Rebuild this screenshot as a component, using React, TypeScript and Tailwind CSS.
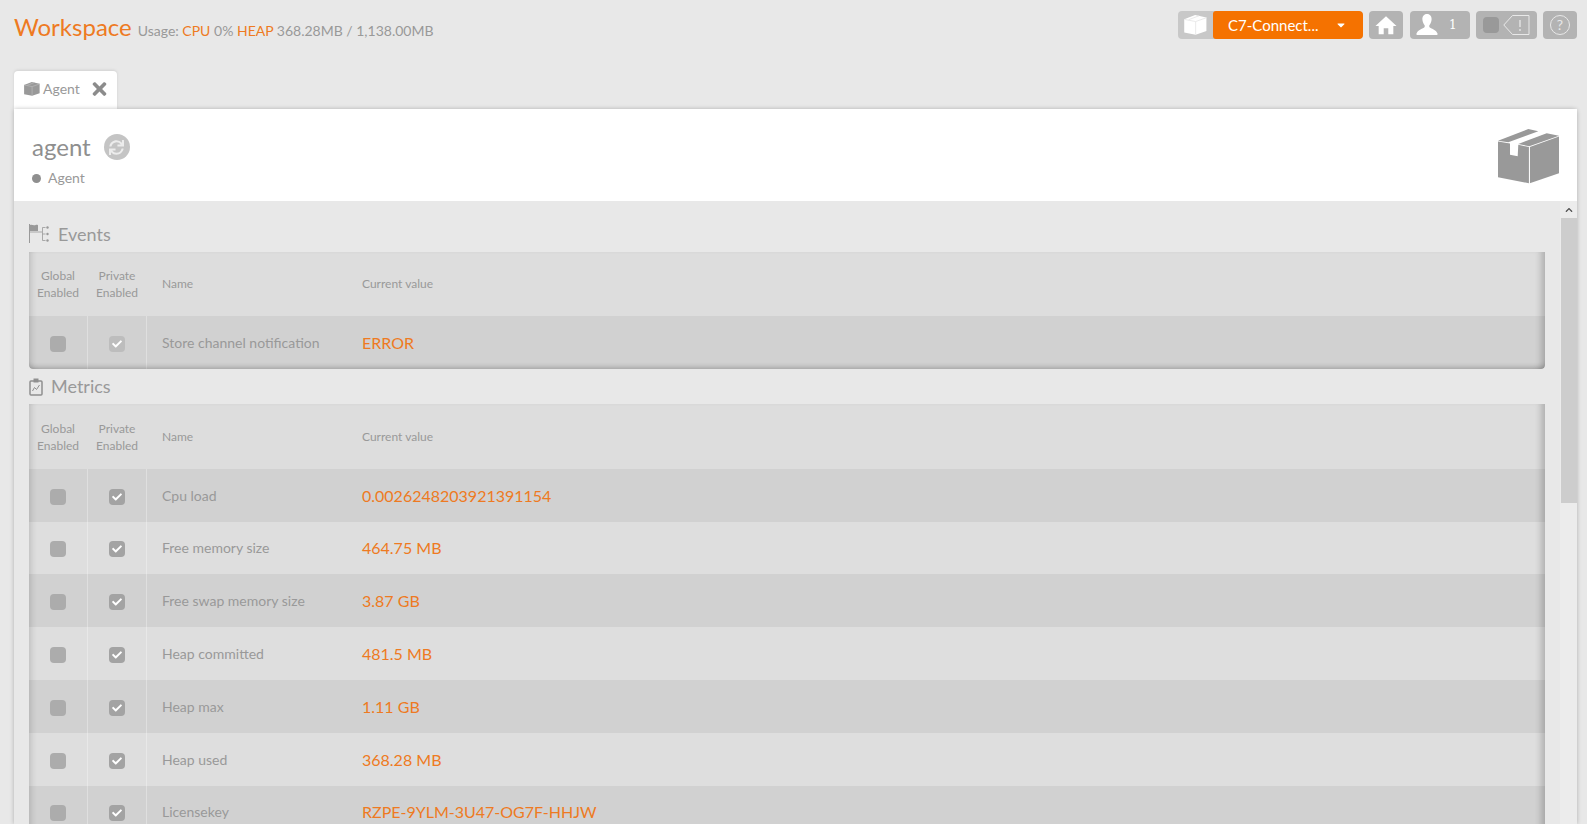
import { FaCheck, FaSync, FaTimes, FaCaretDown, FaChevronUp } from "react-icons/fa";

const Box = ({ className, seam = "#ffffff" }: { className?: string; seam?: string }) => (
  <svg viewBox="0 0 62 55" className={className} fill="currentColor">
    <path d="M0 11.700 L30.300 0 L40.300 2.300 L10.300 13.300 Z" />
    <path d="M48.700 4.300 L61 6.700 L31.300 17.300 L20.300 15 Z" />
    <path d="M0 12.500 L12 14.500 L12 25.700 L19.700 27.300 L20.300 15.800 L31 18 L31 54.300 L0 48.300 Z" />
    <path d="M31.800 18 L61 7.500 L61 44.300 L31.800 54.300 Z" />
    <path d="M31.400 17.500 L31.400 54.500" stroke={seam} strokeWidth="0.8" />
  </svg>
);

const SmallBox = ({ className, seam }: { className?: string; seam: string }) => (
  <svg viewBox="0 0 62 55" className={className} fill="currentColor">
    <path d="M0 12 L30 0 L61 7 L61 44.300 L31.400 54.500 L0 48.300 Z" />
    <path d="M31.400 18 L31.400 54 M31.400 18 L61 7.500 M31.400 18 L0 12 M12 13 L41 2" fill="none" stroke={seam} strokeWidth="2.500" />
  </svg>
);

const HomeIcon = () => (
  <svg viewBox="0 0 24 24" className="h-[22px] w-[22px]" fill="#ffffff">
    <path d="M12 2.500 L23.500 13 L20 13 L20 22 L14.500 22 L14.500 15.500 L9.500 15.500 L9.500 22 L4 22 L4 13 L.5 13 Z" />
  </svg>
);

const UserIcon = () => (
  <svg viewBox="0 0 24 24" className="h-[24px] w-[24px]" fill="#ffffff">
    <path d="M12 1c-3.200 0-4.800 2.600-4.600 5.600.1 2.200 1 4.200 2.200 5.600.3.500.3 1.700-.4 2.200C7.400 15.500 2.500 17 1.500 20.500c-.2.800 0 1.500.8 1.500h19.400c.8 0 1-.7.8-1.500-1-3.500-5.900-5-7.700-6.100-.7-.5-.7-1.700-.4-2.200 1.200-1.400 2.100-3.400 2.200-5.600C16.800 3.600 15.200 1 12 1z" />
  </svg>
);

const EventsIcon = () => (
  <svg viewBox="0 0 21 20" className="h-[20px] w-[21px] text-[#999999]" fill="none" stroke="currentColor">
    <path d="M.5 0v19" strokeWidth="1" />
    <path d="M1 1c2-.8 3 .8 5 .2s2-.6 3 0V7H1z" fill="currentColor" stroke="none" />
    <path d="M1 8h12M13.500 3.500h3M13.500 3.500v13M13.500 10h3M13.500 16.500h3" strokeWidth="1" opacity="0.8" />
    <circle cx="18.500" cy="3.500" r="1.200" fill="currentColor" stroke="none" />
    <circle cx="18.500" cy="10" r="1.200" fill="currentColor" stroke="none" />
    <circle cx="18.500" cy="16.500" r="1.200" fill="currentColor" stroke="none" />
  </svg>
);

const MetricsIcon = () => (
  <svg viewBox="0 0 14 18" className="h-[18px] w-[14px] text-[#8f8f8f]" fill="none" stroke="currentColor" strokeWidth="1.500">
    <rect x="1" y="3" width="12" height="14" rx="1" />
    <rect x="4.500" y=".5" width="5" height="4" fill="currentColor" stroke="none" />
    <path d="M3.500 13 L5.500 9.500 L7.500 11.500 L10.500 7" strokeWidth="1" />
  </svg>
);

const Check = ({ on, dim }: { on?: boolean; dim?: boolean }) => (
  <span
    className={`flex h-[16px] w-[16px] items-center justify-center rounded-[4px] ${
      on ? (dim ? "bg-[#bdbdbd]" : "bg-[#a3a3a3]") : "bg-[#acacac]"
    }`}
  >
    {on && <FaCheck className="h-[10px] w-[10px] text-white" />}
  </span>
);

const Head = ({ height }: { height: string }) => (
  <div className={`grid ${height} grid-cols-[59px_59px_200px_1fr] items-center bg-[#dddddd] text-[12px] leading-[17px] text-[#999999]`}>
    <div className="pr-[1px] text-center">Global<br />Enabled</div>
    <div className="pr-[1px] text-center">Private<br />Enabled</div>
    <div className="pb-[1px] pl-[15px]">Name</div>
    <div className="pb-[1px] pl-[15px]">Current value</div>
  </div>
);

const Row = ({ name, value, odd, dim }: { name: string; value: string; odd: boolean; dim?: boolean }) => (
  <div
    className={`grid h-[52.800px] grid-cols-[59px_59px_200px_1fr] items-stretch ${odd ? "bg-[#d1d1d1]" : "bg-[#dedede]"}`}
  >
    <div className="flex items-center justify-center border-r border-white/30 pt-[3px]"><Check /></div>
    <div className="flex items-center justify-center border-r border-white/30 pt-[3px]"><Check on dim={dim} /></div>
    <div className="flex items-center pl-[15px] text-[14px] text-[#999999]">{name}</div>
    <div className="flex items-center pl-[15px] pt-[1px] text-[16px] text-[#ee7a22]">{value}</div>
  </div>
);

const metrics = [
  ["Cpu load", "0.0026248203921391154"],
  ["Free memory size", "464.75 MB"],
  ["Free swap memory size", "3.87 GB"],
  ["Heap committed", "481.5 MB"],
  ["Heap max", "1.11 GB"],
  ["Heap used", "368.28 MB"],
  ["Licensekey", "RZPE-9YLM-3U47-OG7F-HHJW"],
];

export default function App() {
  return (
    <div className="flex h-[824px] flex-col overflow-hidden bg-[#e8e8e8] pl-[14px] pr-[10px] font-['Lato','Liberation_Sans',sans-serif]">
      <header className="flex h-[71px] shrink-0 items-start justify-between">
        <div className="flex items-baseline pt-[11px]">
          <span className="text-[24px] leading-[32px] text-[#ee7a22]">Workspace</span>
          <span className="ml-[6px] text-[14px] text-[#999999]">
            Usage: <span className="text-[#ee7a22]">CPU</span> 0% <span className="text-[#ee7a22]">HEAP</span> 368.28MB / 1,138.00MB
          </span>
        </div>
        <div className="flex items-center pt-[11px]">
          <div className="flex h-[28px] overflow-hidden rounded-[4px] bg-[#c8c8c8]">
            <span className="flex w-[35px] items-center justify-center">
              <SmallBox className="h-[20px] w-[23px] text-white" seam="#e8e8e8" />
            </span>
            <span className="flex w-[150px] items-center justify-between rounded-[3px] bg-[#f57200] pl-[15px] pr-[17px] text-[15px] text-[#ffffff]">
              C7-Connect...
              <FaCaretDown className="h-[12px] w-[10px]" />
            </span>
          </div>
          <span className="ml-[6px] flex h-[28px] w-[34px] items-center justify-center rounded-[4px] bg-[#b3b3b3]">
            <HomeIcon />
          </span>
          <span className="ml-[7px] flex h-[28px] w-[60px] items-center rounded-[4px] bg-[#b3b3b3] pl-[5px] text-[14px] text-white">
            <UserIcon />
            <span className="ml-[10px] font-['DejaVu_Serif',serif] text-[12px]">1</span>
          </span>
          <span className="ml-[6px] flex h-[28px] w-[61px] items-center rounded-[4px] bg-[#b3b3b3] pl-[7px]">
            <span className="h-[16px] w-[16px] rounded-[4px] bg-[#999999]" />
            <svg viewBox="0 0 27 20" className="ml-[4px] h-[20px] w-[27px]" fill="none" stroke="#e8e8e8" strokeWidth="1">
              <path d="M26 .5H9.500L.8 10l8.700 9.500H26z" />
              <path d="M17 5v7M17 14v2" strokeWidth="1.300" />
            </svg>
          </span>
          <span className="ml-[6px] flex h-[28px] w-[34px] items-center justify-center rounded-[4px] bg-[#b3b3b3]">
            <span className="flex h-[20px] w-[20px] items-center justify-center rounded-full border border-[#e8e8e8] text-[14px] leading-none text-[#e8e8e8]">?</span>
          </span>
        </div>
      </header>

      <div className="flex h-[38px] shrink-0 items-stretch">
        <div className="flex w-[103px] items-center rounded-t-[4px] bg-white pb-[3px] pl-[10px] text-[14px] text-[#999999] shadow-[0_-1px_3px_rgba(0,0,0,0.1)]">
          <SmallBox className="h-[14px] w-[16px] text-[#999999]" seam="#bdbdbd" />
          <span className="ml-[3px]">Agent</span>
          <FaTimes className="ml-[11px] h-[20px] w-[17px] text-[#8c8c8c]" />
        </div>
      </div>

      <main className="flex min-h-0 flex-1 flex-col rounded-tr-[4px] shadow-[0_0_4px_rgba(0,0,0,0.25)]">
        <section className="flex h-[92px] shrink-0 items-start justify-between bg-white pl-[18px] pr-[17px]">
          <div>
            <div className="flex items-center pt-[24px]">
              <span className="text-[24px] leading-[28px] text-[#8f8f8f]">agent</span>
              <span className="ml-[13px] flex h-[26px] w-[26px] items-center justify-center rounded-full bg-[#c4c4c4]">
                <FaSync className="h-[15px] w-[15px] text-[#ececec]" />
              </span>
            </div>
            <div className="mt-[8px] flex items-center text-[14px] leading-[18px] text-[#999999]">
              <span className="h-[9px] w-[9px] rounded-full bg-[#8f8f8f]" />
              <span className="ml-[7px]">Agent</span>
            </div>
          </div>
          <Box className="mt-[20px] h-[55px] w-[62px] text-[#999999]" />
        </section>

        <div className="flex min-h-0 flex-1">
          <div className="min-w-0 flex-1 overflow-hidden pl-[15px] pr-[15px]">
            <h2 className="flex h-[51px] items-center gap-[8px] pt-[15px] text-[18px] font-normal text-[#999999]">
              <EventsIcon />
              Events
            </h2>
            <div className="relative overflow-hidden rounded-b-[4px]">
              <Head height="h-[64px]" />
              <Row name="Store channel notification" value="ERROR" odd dim />
              <div className="pointer-events-none absolute inset-0 rounded-b-[4px] shadow-[inset_8px_0_6px_-6px_rgba(0,0,0,0.15),inset_-8px_0_6px_-4px_rgba(0,0,0,0.2),inset_0_-6px_5px_-4px_rgba(0,0,0,0.2)]" />
            </div>
            <h2 className="flex h-[35px] items-center gap-[8px] pt-[1px] text-[18px] font-normal text-[#999999]">
              <MetricsIcon />
              Metrics
            </h2>
            <div className="relative">
              <Head height="h-[65px] pt-[2px]" />
              {metrics.map(([n, v], i) => (
                <Row key={n} name={n} value={v} odd={i % 2 === 0} />
              ))}
              <div className="pointer-events-none absolute inset-0 shadow-[inset_8px_0_6px_-6px_rgba(0,0,0,0.15),inset_-8px_0_6px_-4px_rgba(0,0,0,0.2)]" />
            </div>
          </div>
          <div className="flex w-[17px] shrink-0 flex-col bg-[#ececec] pl-[1px]">
            <span className="flex h-[17px] items-center justify-center">
              <FaChevronUp className="h-[8px] w-[8px] text-[#505050]" />
            </span>
            <span className="h-[285px] bg-[#cdcdcd]" />
          </div>
        </div>
      </main>
    </div>
  );
}
